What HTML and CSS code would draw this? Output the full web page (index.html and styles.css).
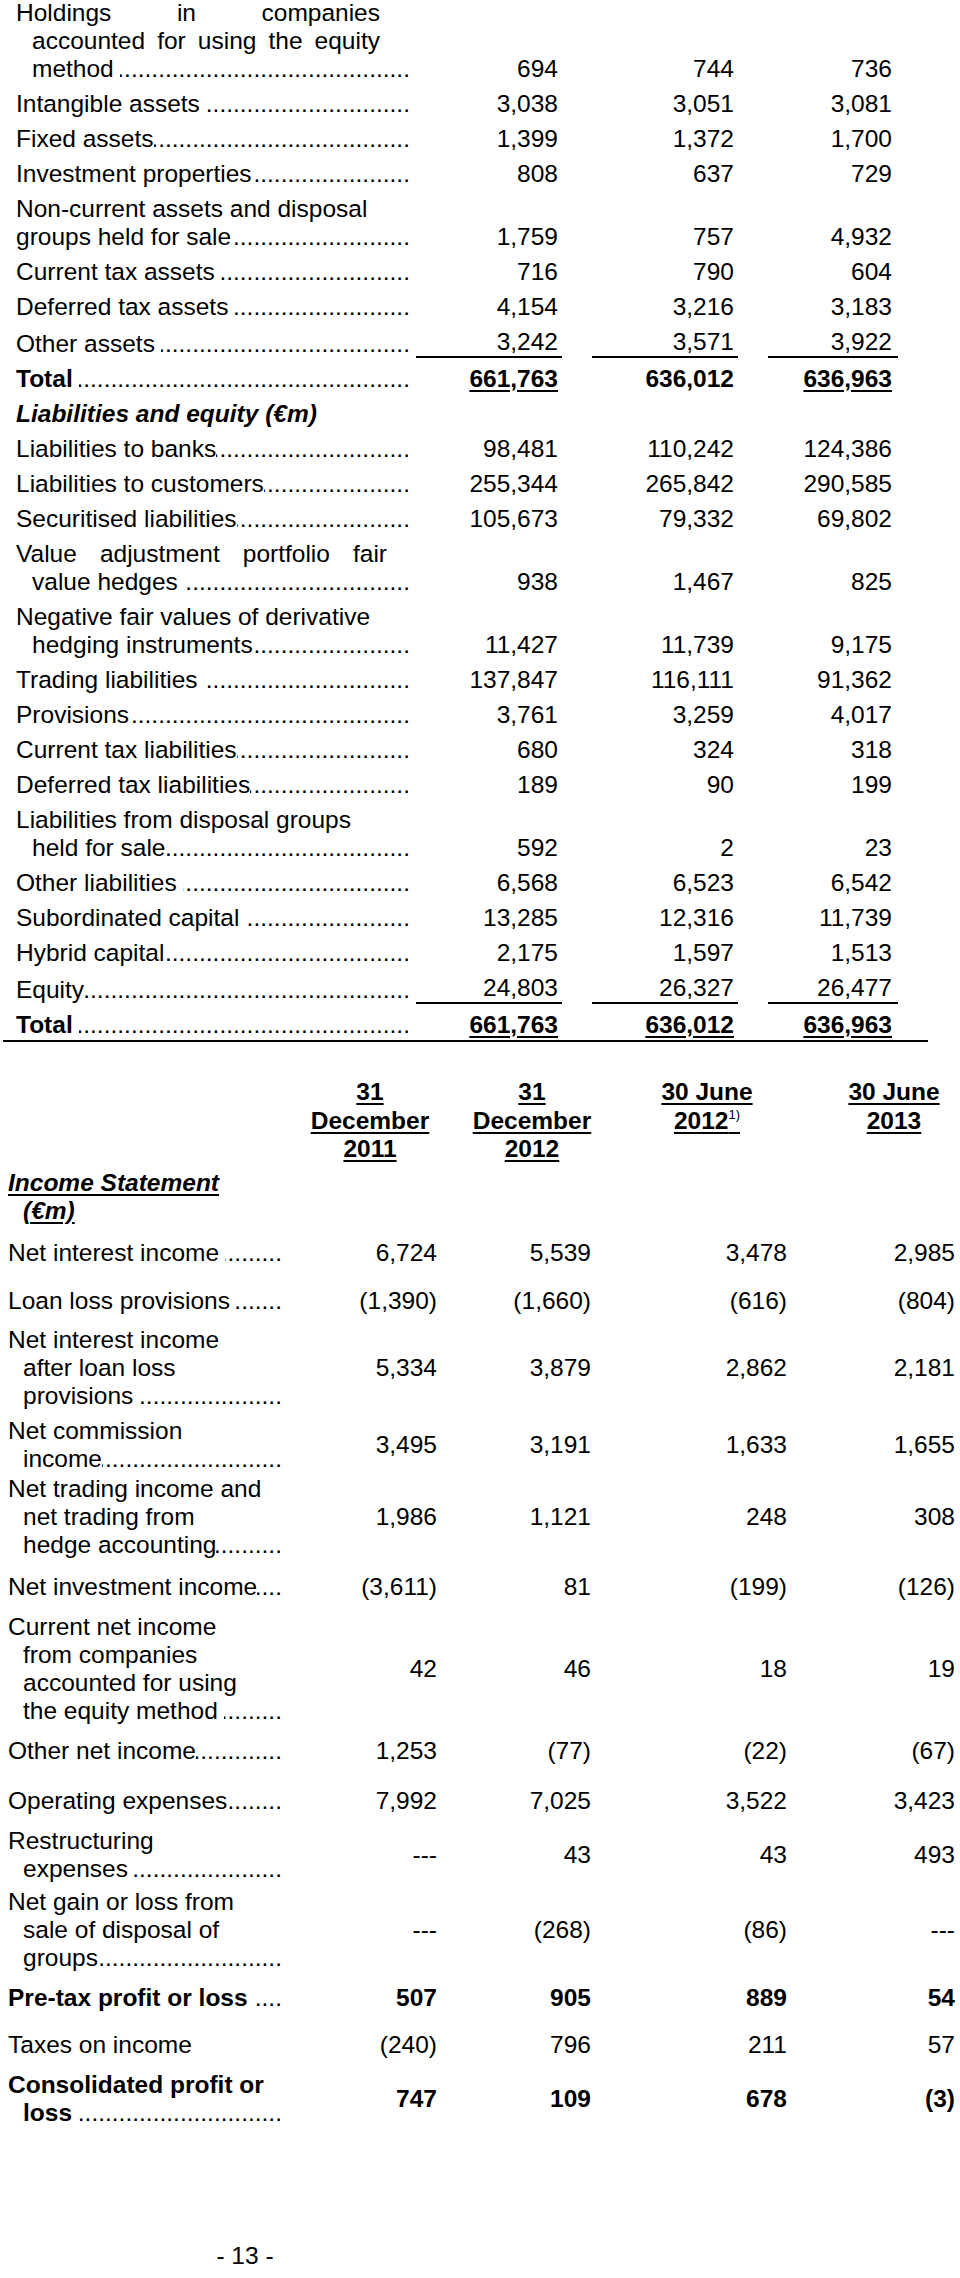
FILE: index.html
```html
<!DOCTYPE html>
<html lang="en">
<head>
<meta charset="utf-8">
<title>Balance sheet and income statement</title>
<link rel="stylesheet" href="styles.css">
</head>
<body>
<div class="page">
  <section class="bs">
    <div class="row">
      <div class="lbl">
        <div class="jus">Holdings in companies</div>
        <div class="jus ind">accounted for using the equity</div>
        <div class="ln ind"><span>method</span><span class="ld sp"></span></div>
      </div>
      <div class="num">694</div><div class="num">744</div><div class="num">736</div>
    </div>
    <div class="row">
      <div class="lbl"><div class="ln"><span>Intangible assets</span><span class="ld sp"></span></div></div>
      <div class="num">3,038</div><div class="num">3,051</div><div class="num">3,081</div>
    </div>
    <div class="row">
      <div class="lbl"><div class="ln"><span>Fixed assets</span><span class="ld"></span></div></div>
      <div class="num">1,399</div><div class="num">1,372</div><div class="num">1,700</div>
    </div>
    <div class="row">
      <div class="lbl"><div class="ln"><span>Investment properties</span><span class="ld"></span></div></div>
      <div class="num">808</div><div class="num">637</div><div class="num">729</div>
    </div>
    <div class="row">
      <div class="lbl">
        <div class="ln">Non-current assets and disposal</div>
        <div class="ln"><span>groups held for sale</span><span class="ld"></span></div>
      </div>
      <div class="num">1,759</div><div class="num">757</div><div class="num">4,932</div>
    </div>
    <div class="row">
      <div class="lbl"><div class="ln"><span>Current tax assets</span><span class="ld sp"></span></div></div>
      <div class="num">716</div><div class="num">790</div><div class="num">604</div>
    </div>
    <div class="row">
      <div class="lbl"><div class="ln"><span>Deferred tax assets</span><span class="ld sp"></span></div></div>
      <div class="num">4,154</div><div class="num">3,216</div><div class="num">3,183</div>
    </div>
    <div class="row">
      <div class="lbl"><div class="ln"><span>Other assets</span><span class="ld sp"></span></div></div>
      <div class="num rule">3,242</div><div class="num rule">3,571</div><div class="num rule">3,922</div>
    </div>
    <div class="row total">
      <div class="lbl"><div class="ln"><span>Total</span><span class="ld sp"></span></div></div>
      <div class="num"><span class="u">661,763</span></div><div class="num">636,012</div><div class="num"><span class="u">636,963</span></div>
    </div>
    <div class="row">
      <div class="lbl"><div class="ln head">Liabilities and equity (€m)</div></div>
    </div>
    <div class="row">
      <div class="lbl"><div class="ln"><span>Liabilities to banks</span><span class="ld"></span></div></div>
      <div class="num">98,481</div><div class="num">110,242</div><div class="num">124,386</div>
    </div>
    <div class="row">
      <div class="lbl"><div class="ln"><span>Liabilities to customers</span><span class="ld"></span></div></div>
      <div class="num">255,344</div><div class="num">265,842</div><div class="num">290,585</div>
    </div>
    <div class="row">
      <div class="lbl"><div class="ln"><span>Securitised liabilities</span><span class="ld"></span></div></div>
      <div class="num">105,673</div><div class="num">79,332</div><div class="num">69,802</div>
    </div>
    <div class="row">
      <div class="lbl">
        <div class="jus jus2">Value adjustment portfolio fair</div>
        <div class="ln ind"><span>value hedges</span><span class="ld sp"></span></div>
      </div>
      <div class="num">938</div><div class="num">1,467</div><div class="num">825</div>
    </div>
    <div class="row">
      <div class="lbl">
        <div class="ln">Negative fair values of derivative</div>
        <div class="ln ind"><span>hedging instruments</span><span class="ld"></span></div>
      </div>
      <div class="num">11,427</div><div class="num">11,739</div><div class="num">9,175</div>
    </div>
    <div class="row">
      <div class="lbl"><div class="ln"><span>Trading liabilities</span><span class="ld sp"></span></div></div>
      <div class="num">137,847</div><div class="num">116,111</div><div class="num">91,362</div>
    </div>
    <div class="row">
      <div class="lbl"><div class="ln"><span>Provisions</span><span class="ld"></span></div></div>
      <div class="num">3,761</div><div class="num">3,259</div><div class="num">4,017</div>
    </div>
    <div class="row">
      <div class="lbl"><div class="ln"><span>Current tax liabilities</span><span class="ld"></span></div></div>
      <div class="num">680</div><div class="num">324</div><div class="num">318</div>
    </div>
    <div class="row">
      <div class="lbl"><div class="ln"><span>Deferred tax liabilities</span><span class="ld"></span></div></div>
      <div class="num">189</div><div class="num">90</div><div class="num">199</div>
    </div>
    <div class="row">
      <div class="lbl">
        <div class="ln">Liabilities from disposal groups</div>
        <div class="ln ind"><span>held for sale</span><span class="ld"></span></div>
      </div>
      <div class="num">592</div><div class="num">2</div><div class="num">23</div>
    </div>
    <div class="row">
      <div class="lbl"><div class="ln"><span>Other liabilities</span><span class="ld sp"></span></div></div>
      <div class="num">6,568</div><div class="num">6,523</div><div class="num">6,542</div>
    </div>
    <div class="row">
      <div class="lbl"><div class="ln"><span>Subordinated capital</span><span class="ld sp"></span></div></div>
      <div class="num">13,285</div><div class="num">12,316</div><div class="num">11,739</div>
    </div>
    <div class="row">
      <div class="lbl"><div class="ln"><span>Hybrid capital</span><span class="ld"></span></div></div>
      <div class="num">2,175</div><div class="num">1,597</div><div class="num">1,513</div>
    </div>
    <div class="row">
      <div class="lbl"><div class="ln"><span>Equity</span><span class="ld"></span></div></div>
      <div class="num rule">24,803</div><div class="num rule">26,327</div><div class="num rule">26,477</div>
    </div>
    <div class="row total">
      <div class="lbl"><div class="ln"><span>Total</span><span class="ld sp"></span></div></div>
      <div class="num"><span class="u">661,763</span></div><div class="num"><span class="u">636,012</span></div><div class="num"><span class="u">636,963</span></div>
    </div>
    <div class="endrule"></div>
  </section>

  <section class="is">
    <div class="irow hdr">
      <div class="ilbl"></div>
      <div class="h"><span>31</span><br><span>December</span><br><span>2011</span></div>
      <div class="h"><span>31</span><br><span>December</span><br><span>2012</span></div>
      <div class="h"><span>30 June</span><br><span>2012<sup>1)</sup></span></div>
      <div class="h h4"><span>30 June</span><br><span>2013</span></div>
    </div>
    <div class="irow title">
      <div class="ilbl">
        <div class="ttl">Income Statement</div>
        <div class="ttl iind">(€m)</div>
      </div>
    </div>
    <div class="irow g14">
      <div class="ilbl"><div class="ln"><span>Net interest income</span><span class="ld sp"></span></div></div>
      <div class="inum">6,724</div><div class="inum">5,539</div><div class="inum">3,478</div><div class="inum">2,985</div>
    </div>
    <div class="irow g20">
      <div class="ilbl"><div class="ln"><span>Loan loss provisions</span><span class="ld sp"></span></div></div>
      <div class="inum">(1,390)</div><div class="inum">(1,660)</div><div class="inum">(616)</div><div class="inum">(804)</div>
    </div>
    <div class="irow g11">
      <div class="ilbl">
        <div class="ln">Net interest income</div>
        <div class="ln iind">after loan loss</div>
        <div class="ln iind"><span>provisions</span><span class="ld sp"></span></div>
      </div>
      <div class="inum">5,334</div><div class="inum">3,879</div><div class="inum">2,862</div><div class="inum">2,181</div>
    </div>
    <div class="irow g7">
      <div class="ilbl">
        <div class="ln">Net commission</div>
        <div class="ln iind"><span>income</span><span class="ld"></span></div>
      </div>
      <div class="inum">3,495</div><div class="inum">3,191</div><div class="inum">1,633</div><div class="inum">1,655</div>
    </div>
    <div class="irow g2">
      <div class="ilbl">
        <div class="ln">Net trading income and</div>
        <div class="ln iind">net trading from</div>
        <div class="ln iind"><span>hedge accounting</span><span class="ld"></span></div>
      </div>
      <div class="inum">1,986</div><div class="inum">1,121</div><div class="inum">248</div><div class="inum">308</div>
    </div>
    <div class="irow g14">
      <div class="ilbl"><div class="ln"><span>Net investment income</span><span class="ld"></span></div></div>
      <div class="inum">(3,611)</div><div class="inum">81</div><div class="inum">(199)</div><div class="inum">(126)</div>
    </div>
    <div class="irow g12">
      <div class="ilbl">
        <div class="ln">Current net income</div>
        <div class="ln iind">from companies</div>
        <div class="ln iind">accounted for using</div>
        <div class="ln iind"><span>the equity method</span><span class="ld sp"></span></div>
      </div>
      <div class="inum">42</div><div class="inum">46</div><div class="inum">18</div><div class="inum">19</div>
    </div>
    <div class="irow g12">
      <div class="ilbl"><div class="ln"><span>Other net income</span><span class="ld"></span></div></div>
      <div class="inum">1,253</div><div class="inum">(77)</div><div class="inum">(22)</div><div class="inum">(67)</div>
    </div>
    <div class="irow g22">
      <div class="ilbl"><div class="ln"><span>Operating expenses</span><span class="ld"></span></div></div>
      <div class="inum">7,992</div><div class="inum">7,025</div><div class="inum">3,522</div><div class="inum">3,423</div>
    </div>
    <div class="irow g12">
      <div class="ilbl">
        <div class="ln">Restructuring</div>
        <div class="ln iind"><span>expenses</span><span class="ld sp"></span></div>
      </div>
      <div class="inum">---</div><div class="inum">43</div><div class="inum">43</div><div class="inum">493</div>
    </div>
    <div class="irow g5">
      <div class="ilbl">
        <div class="ln">Net gain or loss from</div>
        <div class="ln iind">sale of disposal of</div>
        <div class="ln iind"><span>groups</span><span class="ld"></span></div>
      </div>
      <div class="inum">---</div><div class="inum">(268)</div><div class="inum">(86)</div><div class="inum">---</div>
    </div>
    <div class="irow g12 bold">
      <div class="ilbl"><div class="ln"><span>Pre-tax profit or loss</span><span class="ld sp"></span></div></div>
      <div class="inum">507</div><div class="inum">905</div><div class="inum">889</div><div class="inum">54</div>
    </div>
    <div class="irow g19">
      <div class="ilbl"><div class="ln">Taxes on income</div></div>
      <div class="inum">(240)</div><div class="inum">796</div><div class="inum">211</div><div class="inum">57</div>
    </div>
    <div class="irow g12 bold">
      <div class="ilbl">
        <div class="ln">Consolidated profit or</div>
        <div class="ln iind"><span>loss</span><span class="ld sp"></span></div>
      </div>
      <div class="inum">747</div><div class="inum">109</div><div class="inum">678</div><div class="inum">(3)</div>
    </div>
  </section>

  <footer class="pageno">- 13 -</footer>
</div>
</body>
</html>
```

FILE: styles.css
```css
html, body {
  margin: 0;
  padding: 0;
  background: #ffffff;
}

body {
  font-family: "Liberation Sans", Arial, Helvetica, sans-serif;
  font-size: 24.5px;
  line-height: 28px;
  color: #000000;
}

.page {
  width: 960px;
  height: 2278px;
  overflow: hidden;
  margin-top: -1.5px;
}

/* ---------- balance sheet ---------- */
.bs {
  padding-left: 16px;
}

.row {
  display: grid;
  grid-template-columns: 400px 146px 176px 160px;
  align-items: end;
  padding-top: 7px;
}

.row:first-child {
  padding-top: 0;
}

.lbl {
  padding-right: 6px;
  min-width: 0;
}

.ln {
  display: flex;
  white-space: nowrap;
}

.ind {
  padding-left: 16px;
}

.jus {
  text-align: justify;
  text-align-last: justify;
  margin-right: 30px;
  white-space: nowrap;
}

.jus2 {
  margin-right: 23px;
}

.ld {
  flex: 1 1 0;
  min-width: 0;
  overflow: hidden;
  display: flex;
  justify-content: flex-end;
  font-weight: 400;
}

.ld::before {
  content: "....................................................................................................";
  flex-shrink: 0;
  white-space: nowrap;
}

.ld.sp {
  margin-left: 6px;
}

.num {
  text-align: right;
  padding-right: 4px;
  white-space: nowrap;
}

.row .num:nth-child(3),
.row .num:nth-child(4) {
  margin-left: 30px;
}

.row .num:last-child {
  padding-right: 6px;
}

.num.rule {
  border-bottom: 2px solid #000000;
}

.total {
  font-weight: 700;
}

.u {
  text-decoration: underline;
  text-decoration-thickness: 2px;
  text-underline-offset: 3px;
}

.head {
  font-weight: 700;
  font-style: italic;
}

.endrule {
  margin: 1.5px 0 0 -13px;
  width: 925px;
  height: 2px;
  background: #000000;
}

/* ---------- income statement ---------- */
.is {
  padding-left: 8px;
  margin-top: 36px;
}

.irow {
  display: grid;
  grid-template-columns: 282px 160px 164px 186px 160px;
  align-items: center;
}

.ilbl {
  padding-right: 8px;
  min-width: 0;
}

.iind {
  padding-left: 15px;
}

.inum {
  text-align: right;
  white-space: nowrap;
}

.irow .inum:nth-child(2) { padding-right: 13px; }
.irow .inum:nth-child(3) { padding-right: 23px; }
.irow .inum:nth-child(4) { padding-right: 13px; }
.irow .inum:nth-child(5) { padding-right: 5px; }

.hdr {
  align-items: start;
}

.h {
  text-align: center;
  font-weight: 700;
  line-height: 28.5px;
}

.h span {
  text-decoration: underline;
  text-decoration-thickness: 2px;
  text-underline-offset: 3px;
}

.h4 {
  padding-left: 28px;
}

.h sup {
  font-size: 13px;
  line-height: 0;
  vertical-align: 10px;
  font-weight: 400;
}

.title {
  padding-top: 5px;
}

.title .ilbl {
  grid-column: 1 / 3;
}

.ttl {
  font-weight: 700;
  font-style: italic;
  text-decoration: underline;
  text-decoration-thickness: 2px;
  text-underline-offset: 3px;
}

.bold {
  font-weight: 700;
}

.g2 { padding-top: 2px; }
.g5 { padding-top: 5px; }
.g7 { padding-top: 7px; }
.g11 { padding-top: 11px; }
.g12 { padding-top: 12px; }
.g14 { padding-top: 14px; }
.g19 { padding-top: 19px; }
.g20 { padding-top: 20px; }
.g22 { padding-top: 22px; }

/* ---------- footer ---------- */
.pageno {
  width: 490px;
  text-align: center;
  margin-top: 115px;
}
```
